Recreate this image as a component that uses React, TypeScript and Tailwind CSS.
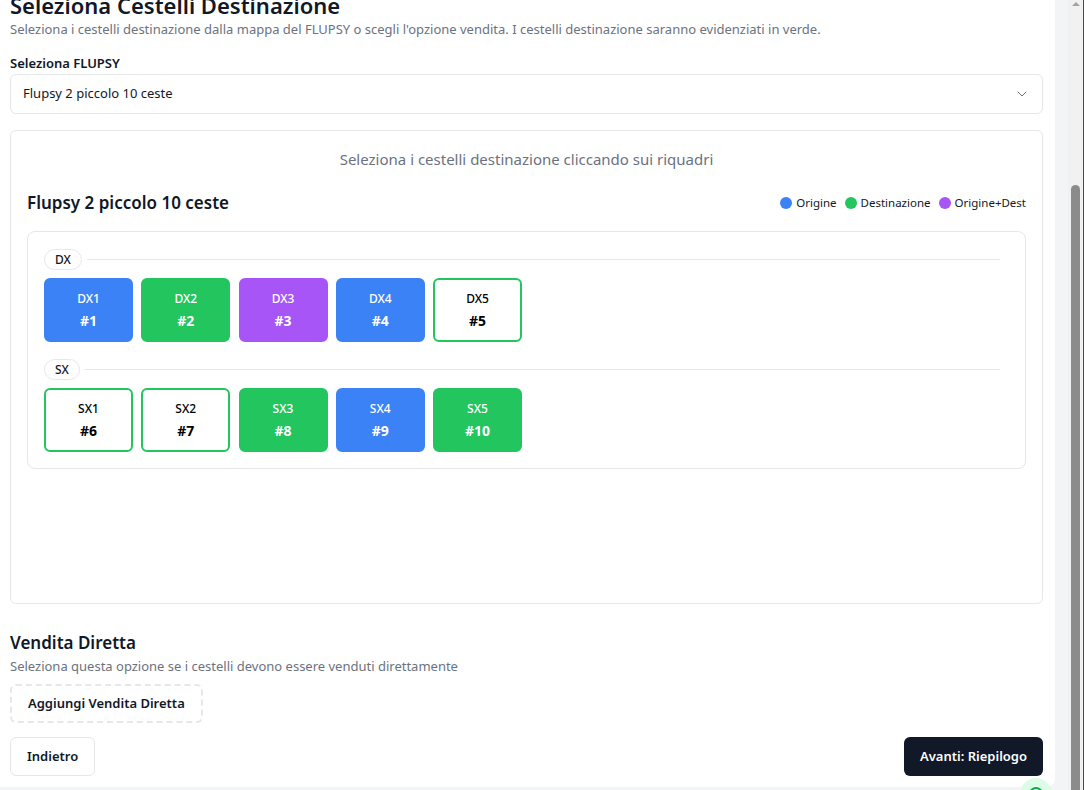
import { ChevronDown } from "lucide-react";

type Basket = { label: string; num: number; kind: "origin" | "dest" | "both" | "selected" };

const rows: { name: string; baskets: Basket[] }[] = [
  {
    name: "DX",
    baskets: [
      { label: "DX1", num: 1, kind: "origin" },
      { label: "DX2", num: 2, kind: "dest" },
      { label: "DX3", num: 3, kind: "both" },
      { label: "DX4", num: 4, kind: "origin" },
      { label: "DX5", num: 5, kind: "selected" },
    ],
  },
  {
    name: "SX",
    baskets: [
      { label: "SX1", num: 6, kind: "selected" },
      { label: "SX2", num: 7, kind: "selected" },
      { label: "SX3", num: 8, kind: "dest" },
      { label: "SX4", num: 9, kind: "origin" },
      { label: "SX5", num: 10, kind: "dest" },
    ],
  },
];

const kindClass: Record<Basket["kind"], string> = {
  origin: "bg-[#3b82f6] text-white border-[#3b82f6]",
  dest: "bg-[#22c55e] text-white border-[#22c55e]",
  both: "bg-[#a855f7] text-white border-[#a855f7]",
  selected: "bg-white text-black border-[#22c55e]",
};

function BasketTile({ basket }: { basket: Basket }) {
  return (
    <button
      type="button"
      className={`flex h-[64px] w-[89px] flex-col items-center justify-center rounded-md border-2 ${kindClass[basket.kind]}`}
    >
      <span className="text-[12px] font-medium leading-4">{basket.label}</span>
      <span className="mt-[6px] text-[14px] font-bold leading-4">#{basket.num}</span>
    </button>
  );
}

export default function App() {
  return (
    <div
      className="relative flex h-[790px] w-full overflow-hidden bg-[#f3f4f6] text-[#111827]"
      style={{ fontFamily: '"Noto Sans", "Open Sans", sans-serif' }}
    >
      <div className="h-[787px] w-[1055px] shrink-0 overflow-hidden rounded-br-lg bg-white">
        <div className="-mt-[11px] pl-[10px] pr-[12px]">
          <h1 className="text-[22px] font-semibold leading-8">Seleziona Cestelli Destinazione</h1>
          <p className="mt-[-2px] text-[13px] leading-5 text-[#6b7280]">
            Seleziona i cestelli destinazione dalla mappa del FLUPSY o scegli l'opzione vendita. I cestelli destinazione saranno evidenziati in verde.
          </p>

          <label className="mt-[14px] block text-[13px] font-semibold leading-5">Seleziona FLUPSY</label>
          <div className="mt-[1px] flex h-[40px] items-center justify-between rounded-md border border-[#e5e7eb] px-[12px] text-[13px]">
            <span>Flupsy 2 piccolo 10 ceste</span>
            <ChevronDown className="h-4 w-4 text-[#6b7280]" strokeWidth={1.5} />
          </div>

          <div className="mt-[16px] h-[474px] rounded-md border border-[#e5e7eb] px-[16px] pt-[18px]">
            <p className="text-center text-[15px] leading-5 text-[#6b7280]">
              Seleziona i cestelli destinazione cliccando sui riquadri
            </p>
            <div className="mt-[22px] flex items-center justify-between">
              <h2 className="text-[17px] font-semibold leading-6">Flupsy 2 piccolo 10 ceste</h2>
              <div className="flex items-center gap-[8px] text-[11.5px]">
                {[
                  ["Origine", "bg-[#3b82f6]"],
                  ["Destinazione", "bg-[#22c55e]"],
                  ["Origine+Dest", "bg-[#a855f7]"],
                ].map(([label, color]) => (
                  <span key={label} className="flex items-center gap-[4px]">
                    <span className={`h-[12px] w-[12px] rounded-full ${color}`} />
                    {label}
                  </span>
                ))}
              </div>
            </div>

            <div className="mt-[16px] flex flex-col gap-[17px] rounded-lg border border-[#e5e7eb] pb-[16px] pl-[16px] pr-[25px] pt-[17px]">
              {rows.map((row) => (
                <div key={row.name}>
                  <div className="flex items-center gap-[5px]">
                    <span className="flex h-[21px] items-center rounded-full border border-[#e5e7eb] px-[10px] text-[12px] font-medium">
                      {row.name}
                    </span>
                    <div className="h-px flex-1 bg-[#e5e7eb]" />
                  </div>
                  <div className="mt-[8px] flex gap-[8.25px]">
                    {row.baskets.map((b) => (
                      <BasketTile key={b.label} basket={b} />
                    ))}
                  </div>
                </div>
              ))}
            </div>
          </div>

          <h3 className="mt-[27px] text-[17px] font-semibold leading-6">Vendita Diretta</h3>
          <p className="mt-[1px] text-[13px] leading-5 text-[#6b7280]">
            Seleziona questa opzione se i cestelli devono essere venduti direttamente
          </p>
          <button
            type="button"
            className="mt-[8px] h-[39px] rounded-md border-2 border-dashed border-[#e5e7eb] px-[16px] text-[13px] font-semibold"
          >
            Aggiungi Vendita Diretta
          </button>

          <div className="mt-[14px] flex items-center justify-between">
            <button
              type="button"
              className="h-[39px] rounded-md border border-[#e5e7eb] px-[16px] text-[13px] font-semibold"
            >
              Indietro
            </button>
            <button
              type="button"
              className="h-[39px] rounded-md bg-[#111827] px-[16px] text-[13px] font-semibold text-white"
            >
              Avanti: Riepilogo
            </button>
          </div>
        </div>
      </div>

      <div className="ml-auto flex h-full w-[16px] flex-col items-center border-r border-[#4b4b4b] bg-[#f1f1f1]">
        <div className="mt-[2px] h-0 w-0 border-x-[4px] border-b-[4px] border-x-transparent border-b-[#a3a3a3]" />
        <div className="mt-[179px] w-[9px] flex-1 rounded-t-full bg-[#8b8b8b]" />
      </div>

      <div className="absolute left-[1020px] top-[778px] flex h-[32px] w-[32px] items-start justify-center rounded-full bg-[#dcfce7] pt-[9px]">
        <div className="h-[14px] w-[14px] rounded-full border-2 border-[#16a34a]" />
      </div>
    </div>
  );
}
